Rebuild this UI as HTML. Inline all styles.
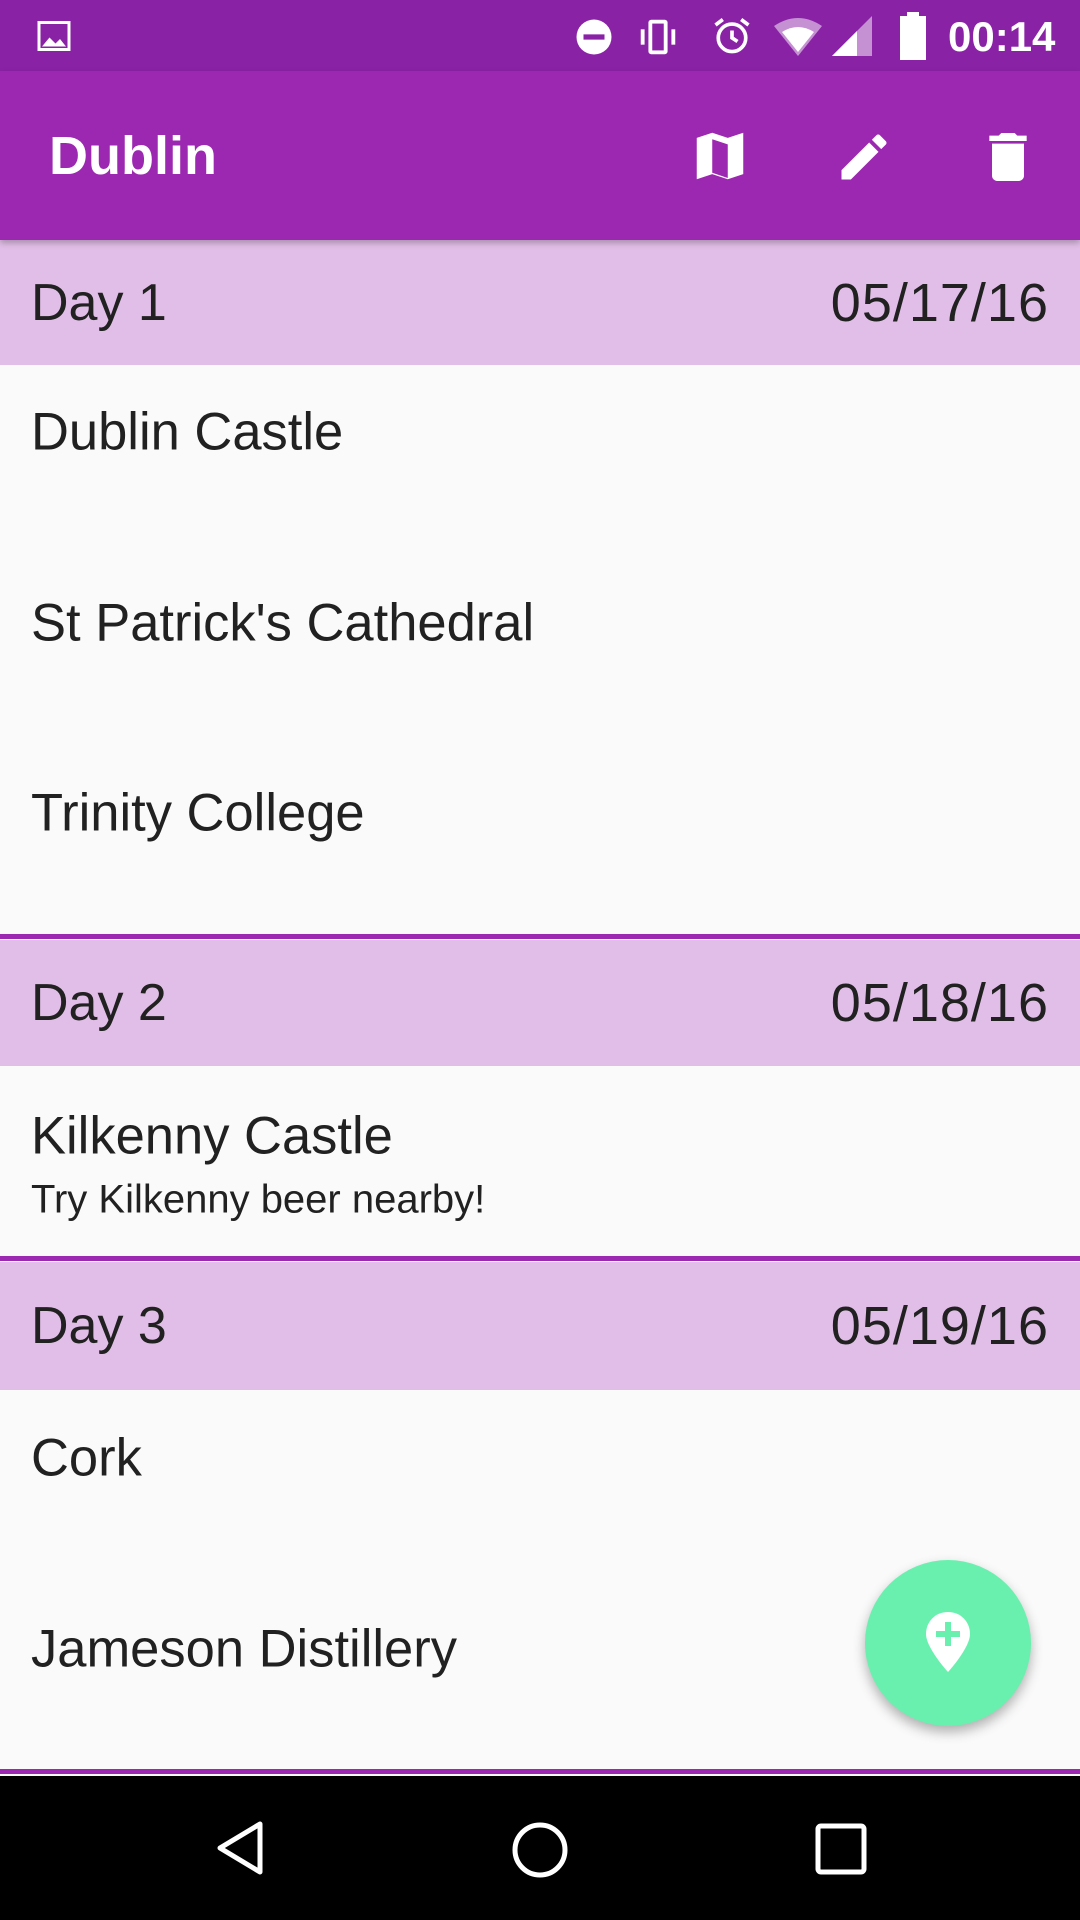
<!DOCTYPE html>
<html><head><meta charset="utf-8"><style>
body{margin:0;width:1080px;height:1920px;position:relative;overflow:hidden;background:#FAFAFA;font-family:"Liberation Sans",Roboto,sans-serif;color:#212121}
.abs{position:absolute}
.status{left:0;top:0;width:1080px;height:71px;background:#8A22A6}
.appbar{left:0;top:71px;width:1080px;height:169px;background:#9C27B0;box-shadow:0 3px 6px rgba(0,0,0,.25);z-index:2}
.hdr{left:0;width:1080px;height:125px;background:#E1BEE7}
.hdr span{position:absolute;top:50%;transform:translateY(-50%);font-size:52px}
.hdr span.d{font-size:54px;letter-spacing:1px}
.item{left:31px;font-size:52.5px;transform:translateY(-50%);white-space:nowrap}
.line{left:0;width:1080px;height:5px;background:#9C27B0}
</style></head><body>
<div class="abs status">
<svg class="abs" style="left:36px;top:18px" width="36" height="36" viewBox="0 0 24 24"><rect x="2" y="3" width="20" height="18" fill="none" stroke="#fff" stroke-width="2"/><path d="M4 19l5-6 4 4 3-3 4 5z" fill="#fff"/></svg>
<svg class="abs" style="left:573px;top:16px" width="42" height="42" viewBox="0 0 24 24"><circle cx="12" cy="12" r="10" fill="#fff"/><rect x="6" y="10.5" width="12" height="3" fill="#8A22A6"/></svg>
<svg class="abs" style="left:635px;top:14px" width="46" height="46" viewBox="0 0 24 24" fill="#fff"><rect x="7" y="3" width="10" height="18" rx="1.5"/><rect x="9" y="5" width="6" height="14" fill="#8A22A6"/><rect x="3" y="8" width="2" height="8"/><rect x="19" y="8" width="2" height="8"/></svg>
<svg class="abs" style="left:710px;top:14px" width="44" height="44" viewBox="0 0 24 24" fill="none" stroke="#fff" stroke-width="2"><circle cx="12" cy="13" r="7.5"/><path d="M12 9v4l3 2M3 6l4-3M21 6l-4-3"/></svg>
<svg class="abs" style="left:772px;top:14px" width="104" height="44" viewBox="0 0 104 44"><path d="M2 12 Q26 -4 50 12 L26 42z" fill="#fff" opacity=".5"/><path d="M10 18 Q26 8 42 18 L26 38z" fill="#fff"/><path d="M60 42 L100 2 L100 42z" fill="#fff" opacity=".5"/><path d="M60 42 L85 17 L85 42z" fill="#fff"/></svg>
<svg class="abs" style="left:898px;top:12px" width="30" height="48" viewBox="0 0 30 48"><rect x="9" y="0" width="12" height="5" fill="#fff"/><rect x="2" y="4" width="26" height="44" fill="#fff"/></svg>
<div class="abs" style="left:948px;top:13px;font-size:42px;font-weight:bold;color:#fff">00:14</div>
</div>
<div class="abs appbar">
<div class="abs" style="left:49px;top:50%;transform:translateY(-50%);font-size:54px;font-weight:bold;color:#fff">Dublin</div>
<svg class="abs" style="left:689px;top:54px" width="62" height="62" viewBox="0 0 24 24" fill="#fff"><path d="M3 5l6-2 6 2 6-2v16l-6 2-6-2-6 2z"/><path d="M9 5.5v13l6 2v-13z" fill="#9C27B0"/></svg>
<svg class="abs" style="left:834px;top:56px" width="60" height="60" viewBox="0 0 24 24" fill="#fff"><path d="M3 17.25V21h3.75L17.81 9.94l-3.75-3.75zM20.71 7.04a1 1 0 000-1.41l-2.34-2.34a1 1 0 00-1.41 0l-1.83 1.83 3.75 3.75z"/></svg>
<svg class="abs" style="left:976px;top:54px" width="64" height="64" viewBox="0 0 24 24" fill="#fff"><path d="M6 19c0 1.1.9 2 2 2h8c1.1 0 2-.9 2-2V7H6zM19 4h-3.5l-1-1h-5l-1 1H5v2h14z"/></svg>
</div>
<div class="abs hdr" style="top:240px"><span style="left:31px">Day 1</span><span class="d" style="right:31px">05/17/16</span></div>
<div class="abs item" style="top:432px">Dublin Castle</div>
<div class="abs item" style="top:623px">St Patrick's Cathedral</div>
<div class="abs item" style="top:813px">Trinity College</div>
<div class="abs line" style="top:934px"></div>
<div class="abs hdr" style="top:940px;height:126px"><span style="left:31px">Day 2</span><span class="d" style="right:31px">05/18/16</span></div>
<div class="abs item" style="top:1136px">Kilkenny Castle</div>
<div class="abs item" style="top:1200px;font-size:40px">Try Kilkenny beer nearby!</div>
<div class="abs line" style="top:1256px"></div>
<div class="abs hdr" style="top:1262px;height:128px"><span style="left:31px">Day 3</span><span class="d" style="right:31px">05/19/16</span></div>
<div class="abs item" style="top:1458px">Cork</div>
<div class="abs item" style="top:1649px">Jameson Distillery</div>
<div class="abs line" style="top:1769px"></div>
<div class="abs" style="left:865px;top:1560px;width:166px;height:166px;border-radius:50%;background:#69F0AE;box-shadow:0 6px 12px rgba(0,0,0,.3)"></div>
<svg class="abs" style="left:922px;top:1610px" width="52" height="64" viewBox="0 0 26 32"><path d="M13 1C6.5 1 2 6 2 12c0 7 11 19 11 19s11-12 11-19C24 6 19.5 1 13 1z" fill="#fff"/><path d="M13 6v12M7 12h12" stroke="#69F0AE" stroke-width="3"/></svg>
<div class="abs" style="left:0;top:1776px;width:1080px;height:144px;background:#000">
<svg class="abs" style="left:210px;top:42px" width="60" height="60" viewBox="0 0 60 60"><path d="M50 6L10 30l40 24z" fill="none" stroke="#fff" stroke-width="5" stroke-linejoin="round"/></svg>
<svg class="abs" style="left:508px;top:42px" width="64" height="64" viewBox="0 0 64 64"><circle cx="32" cy="32" r="25" fill="none" stroke="#fff" stroke-width="5"/></svg>
<svg class="abs" style="left:813px;top:45px" width="56" height="56" viewBox="0 0 56 56"><rect x="5" y="5" width="46" height="46" rx="3" fill="none" stroke="#fff" stroke-width="5"/></svg>
</div>
</body></html>
